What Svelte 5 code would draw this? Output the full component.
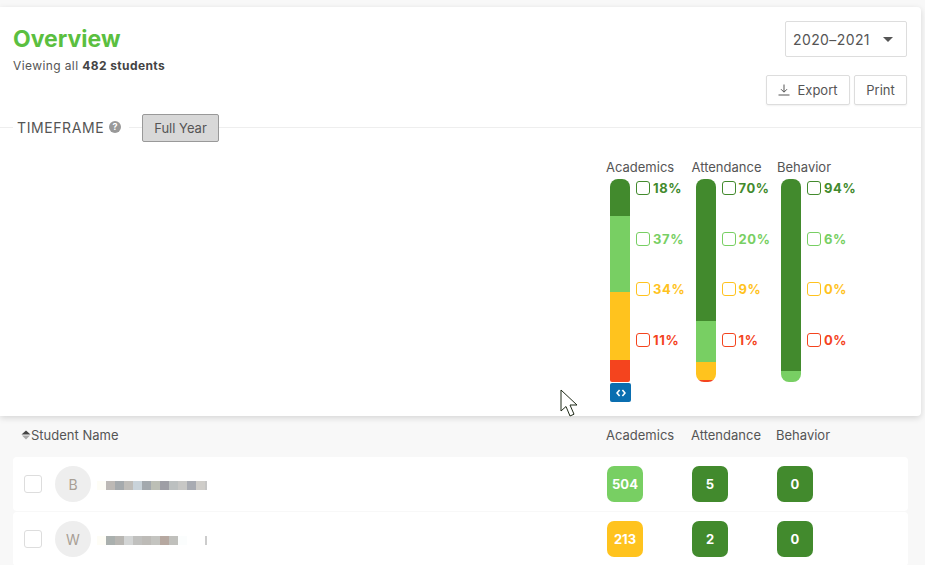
<script>
  const measures = [
    {
      name: 'Academics',
      segments: [['dark', 37], ['light', 76], ['yellow', 68], ['red', 22]],
      values: [['dark', '18%'], ['light', '37%'], ['yellow', '34%'], ['red', '11%']],
      flat: true
    },
    {
      name: 'Attendance',
      segments: [['dark', 142], ['light', 41], ['yellow', 18], ['red', 2]],
      values: [['dark', '70%'], ['light', '20%'], ['yellow', '9%'], ['red', '1%']]
    },
    {
      name: 'Behavior',
      segments: [['dark', 192], ['light', 11]],
      values: [['dark', '94%'], ['light', '6%'], ['yellow', '0%'], ['red', '0%']]
    }
  ];

  // the last block of each name is the 2px sliver at its right edge
  const students = [
    {
      initial: 'B',
      blur: ['#fefdf6', '#bdb9b5', '#a5aaad', '#bfbdb9', '#c9d3da', '#a3a9ae', '#bcbfb5', '#9e9ea5', '#bcc0c0', '#c7c7c5', '#a8abb2', '#cfcdc9', '#c5c5c5'],
      scores: [['light', 504], ['dark', 5], ['dark', 0]]
    },
    {
      initial: 'W',
      blur: ['#fefdf6', '#aab0ae', '#b8b6b2', '#d3d5d5', '#c0c0be', '#bdbbb7', '#c4c4c0', '#b6a8a0', '#c0c0bc', '#fbfdfd', 'transparent', 'transparent', '#cccccc'],
      scores: [['yellow', 213], ['dark', 2], ['dark', 0]]
    }
  ];
</script>

<div class="page">
  <section class="card">
    <header class="top">
      <div>
        <h1>Overview</h1>
        <p class="sub">Viewing all <b>482 students</b></p>
      </div>
      <div class="actions">
        <button class="select">2020–2021 <span class="caret"></span></button>
        <div class="btns">
          <button class="btn export">
            <svg width="12" height="12" viewBox="0 0 12 12" fill="none" stroke="#555" stroke-width="1">
              <path d="M6 0.5V8M3 5.2L6 8.2L9 5.2M0.5 11H11.5" />
            </svg>
            Export
          </button>
          <button class="btn print">Print</button>
        </div>
      </div>
    </header>

    <div class="timeframe">
      <span class="rule short"></span>
      <span class="tf-label">TIMEFRAME</span>
      <span class="help">?</span>
      <span class="rule gap"></span>
      <button class="full">Full Year</button>
      <span class="rule fill"></span>
    </div>

    <div class="chart">
      {#each measures as m}
        <div class="measure">
          <div class="measure-name">{m.name}</div>
          <div class="measure-body">
            <div class="bar-wrap">
              <div class="bar" class:flat={m.flat}>
                {#each m.segments as [tone, h]}
                  <div class="seg {tone}" style="height: {h}px"></div>
                {/each}
              </div>
              {#if m.flat}
                <div class="embed">
                  <svg width="10" height="8" viewBox="0 0 10 8" fill="none" stroke="#fff" stroke-width="1.6">
                    <path d="M3.6 1L1 4L3.6 7M6.4 1L9 4L6.4 7" />
                  </svg>
                </div>
              {/if}
            </div>
            <div class="legend">
              {#each m.values as [tone, v]}
                <div class="legend-row {tone}-text">
                  <span class="box"></span>
                  <span>{v}</span>
                </div>
              {/each}
            </div>
          </div>
        </div>
      {/each}
    </div>
  </section>

  <div class="table-head">
    <div class="name-head">
      <svg width="10" height="10" viewBox="0 0 10 10">
        <path d="M5 0.5L9.5 4.6H0.5Z" fill="#444" />
        <path d="M5 9.5L1 5.6H9Z" fill="#aaa" />
      </svg>
      Student Name
    </div>
    {#each measures as m}
      <div>{m.name}</div>
    {/each}
  </div>

  {#each students as s}
    <div class="row">
      <div class="who">
        <span class="check"></span>
        <span class="avatar">{s.initial}</span>
        <span class="blur">
          {#each s.blur as c}
            <i style="background: {c}"></i>
          {/each}
        </span>
      </div>
      {#each s.scores as [tone, n]}
        <div><span class="score {tone}">{n}</span></div>
      {/each}
    </div>
  {/each}

  <svg class="cursor" width="20" height="30" viewBox="0 0 20 30">
    <path d="M1 1V22L6 17.5L10 27L14 25.2L10 16H17Z" fill="#fff" stroke="#1f2a18" stroke-width="1" />
  </svg>
</div>

<style>
  :global(body) {
    background: #f8f8f8;
  }

  .page {
    position: relative;
    height: 565px;
    overflow: hidden;
    background: #f8f8f8;
    font-family: Inter, "Liberation Sans", sans-serif;
    color: #555;
  }

  .card {
    margin: 7px 4px 0 0;
    height: 409px;
    background: #fff;
    border-radius: 0 4px 4px 0;
    box-shadow: 0 2px 6px rgba(0, 0, 0, 0.14);
  }

  .top {
    display: flex;
    justify-content: space-between;
    padding: 14px 14px 0 13px;
  }

  h1 {
    margin: 4px 0 0;
    font-size: 23px;
    line-height: 29px;
    font-weight: 700;
    color: #5bbf40;
  }

  .sub {
    margin: 4px 0 0;
    font-size: 12px;
    line-height: 15px;
    letter-spacing: 0.4px;
  }

  .sub b {
    color: #444;
  }

  .actions {
    display: flex;
    flex-direction: column;
    align-items: flex-end;
    gap: 18px;
  }

  button {
    font-family: inherit;
    color: #555;
    background: #fff;
    border: 1px solid #ddd;
    padding: 0;
  }

  .select {
    display: flex;
    align-items: center;
    justify-content: space-between;
    width: 122px;
    height: 36px;
    padding: 0 13px 0 7px;
    font-size: 14px;
    letter-spacing: 0.4px;
    border-radius: 2px;
  }

  .caret {
    border: 5px solid transparent;
    border-top: 5px solid #555;
    border-bottom: 0;
  }

  .btns {
    display: flex;
    gap: 4px;
  }

  .btn {
    height: 30px;
    font-size: 13px;
    border-radius: 2px;
    box-shadow: 0 1px 2px rgba(0, 0, 0, 0.06);
  }

  .export {
    display: flex;
    align-items: center;
    justify-content: center;
    gap: 7px;
    width: 84px;
  }

  .print {
    width: 53px;
  }

  .timeframe {
    display: flex;
    align-items: center;
    height: 28px;
    margin-top: 9px;
  }

  .rule {
    height: 1px;
    margin-bottom: 2px;
    background: #eee;
  }

  .short {
    width: 13px;
  }

  .gap {
    width: 13px;
    margin-left: 8px;
  }

  .fill {
    flex: 1;
  }

  .tf-label {
    width: 96px;
    margin-bottom: 2px;
    padding-left: 4px;
    box-sizing: border-box;
    font-size: 14px;
    letter-spacing: 0.6px;
  }

  .help {
    width: 12px;
    height: 12px;
    margin-bottom: 2px;
    border-radius: 50%;
    background: #999;
    color: #fff;
    font-size: 9px;
    font-weight: 700;
    line-height: 12px;
    text-align: center;
  }

  .full {
    width: 77px;
    height: 28px;
    font-size: 13px;
    background: #d8d8d8;
    border-color: #999;
    border-radius: 2px;
  }

  .chart {
    display: flex;
    padding: 17px 0 0 606px;
  }

  .measure {
    width: 85.5px;
  }

  .measure-name {
    height: 20px;
    font-size: 13px;
    line-height: 16px;
    white-space: nowrap;
  }

  .measure-body {
    display: flex;
    padding-left: 4px;
  }

  .bar-wrap {
    width: 20px;
  }

  .bar {
    width: 20px;
    border-radius: 8px;
    overflow: hidden;
  }

  .bar.flat {
    border-radius: 8px 8px 2px 2px;
  }

  .embed {
    display: flex;
    align-items: center;
    justify-content: center;
    width: 21px;
    height: 19px;
    margin-top: 1px;
    background: #0a6eb0;
    border-radius: 2px;
  }

  .legend {
    display: flex;
    flex-direction: column;
    gap: 33.6px;
    margin: 0.7px 0 0 6px;
  }

  .legend-row {
    display: flex;
    align-items: center;
    gap: 3px;
    height: 17px;
    font-size: 13px;
    font-weight: 700;
    letter-spacing: 0.6px;
  }

  .box {
    width: 12px;
    height: 12px;
    border: 1px solid currentColor;
    border-radius: 3px;
  }

  .dark { background: #428a2d; }
  .light { background: #78cf63; }
  .yellow { background: #ffc31e; }
  .red { background: #f4441e; }

  .dark-text { color: #428a2d; }
  .light-text { color: #78cf63; }
  .yellow-text { color: #ffc31e; }
  .red-text { color: #f4441e; }

  .table-head,
  .row {
    display: grid;
    grid-template-columns: 593px 85px 85px 1fr;
    margin: 0 17px 0 13px;
  }

  .table-head {
    align-items: center;
    box-sizing: border-box;
    height: 41px;
    padding-bottom: 4px;
    font-size: 13px;
  }

  .name-head {
    display: flex;
    align-items: center;
    padding-left: 8px;
  }

  .row {
    align-items: center;
    height: 54px;
    margin-bottom: 1px;
    background: #fff;
    border-radius: 4px;
  }

  .row > div:not(.who) {
    padding-left: 1px;
  }

  .who {
    display: flex;
    align-items: center;
    padding-left: 11px;
  }

  .check {
    width: 16px;
    height: 16px;
    border: 1px solid #ddd;
    border-radius: 3px;
  }

  .avatar {
    display: flex;
    align-items: center;
    justify-content: center;
    width: 36px;
    height: 36px;
    margin-left: 13px;
    border-radius: 50%;
    background: #eee;
    color: #a89f95;
    font-size: 14px;
  }

  .blur {
    display: flex;
    margin: 2px 0 0 6px;
  }

  .blur i {
    width: 9px;
    height: 9px;
  }

  .blur i:last-child {
    width: 2px;
  }

  .score {
    display: flex;
    align-items: center;
    justify-content: center;
    width: 36px;
    height: 36px;
    border-radius: 7px;
    color: #fff;
    font-size: 13px;
    font-weight: 700;
  }

  .cursor {
    position: absolute;
    left: 560px;
    top: 389px;
  }
</style>
